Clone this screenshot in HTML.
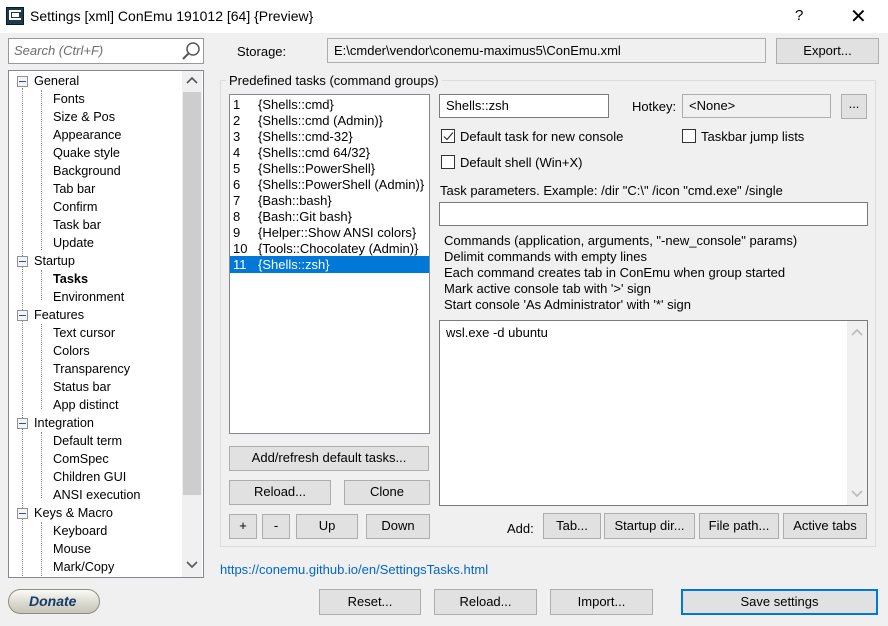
<!DOCTYPE html>
<html><head><style>
*{box-sizing:border-box}
body{margin:0;width:888px;height:626px;background:#f0f0f0;font-family:"Liberation Sans",sans-serif;font-size:13px;color:#000;position:relative;overflow:hidden}
div,span{position:absolute}
.b{background:#e1e1e1;border:1px solid #adadad;text-align:center;line-height:22px;white-space:nowrap}
.e{background:#fff;border:1px solid #7a7a7a;white-space:nowrap}
.t{white-space:nowrap}
.cb{width:14px;height:14px;border:1px solid #333;background:#fff}
.tr span{position:absolute;white-space:nowrap}
.tree span{font-size:12.7px}
</style></head><body>
<div style="left:0;top:0;width:888px;height:33px;background:#fff"></div>
<div style="left:6px;top:7px;width:18px;height:18px;background:#1d3b4a;border:1px solid #0b1a22"></div>
<div style="left:9px;top:10px;width:12px;height:10px;border:2px solid #fff;border-right:none"></div>
<div style="left:12px;top:13px;width:7px;height:4px;border-top:2px solid #fff;border-bottom:2px solid #fff"></div>
<div class="t" style="left:30px;top:8px;font-size:14px">Settings [xml] ConEmu 191012 [64] {Preview}</div>
<div class="t" style="left:795px;top:7px;font-size:15px">?</div>
<div class="t" style="left:850px;top:4px;font-size:20px;font-weight:300">✕</div>

<div class="e" style="left:8px;top:38px;width:196px;height:26px;border-color:#999"></div>
<div class="t" style="left:14px;top:43px;color:#6d6d6d;font-style:italic">Search (Ctrl+F)</div>
<svg style="position:absolute;left:180px;top:40px" width="22" height="22"><circle cx="13" cy="9" r="6" fill="none" stroke="#555" stroke-width="1.5"/><line x1="9" y1="13" x2="3" y2="19" stroke="#555" stroke-width="2"/></svg>

<div class="e" style="left:8px;top:70px;width:196px;height:508px;border-color:#828790"></div>
<div style="left:182px;top:71px;width:20px;height:506px;background:#f0f0f0"></div>
<div style="left:183px;top:92px;width:18px;height:403px;background:#cdcdcd"></div>
<svg style="position:absolute;left:186px;top:76px" width="12" height="8"><path d="M1 7 L6 2 L11 7" fill="none" stroke="#555" stroke-width="1.6"/></svg>
<svg style="position:absolute;left:186px;top:561px" width="12" height="8"><path d="M1 1 L6 6 L11 1" fill="none" stroke="#555" stroke-width="1.6"/></svg>
<div style="left:22px;top:88px;width:0;height:490px;border-left:1px dotted #888"></div>
<div style="left:41px;top:90px;width:0;height:160px;border-left:1px dotted #888"></div>
<div style="left:41px;top:270px;width:0;height:30px;border-left:1px dotted #888"></div>
<div style="left:41px;top:324px;width:0;height:85px;border-left:1px dotted #888"></div>
<div style="left:41px;top:432px;width:0;height:66px;border-left:1px dotted #888"></div>
<div style="left:41px;top:522px;width:0;height:56px;border-left:1px dotted #888"></div>
<div class="tr tree" style="left:0;top:0">
<span style="left:34px;top:74px">General</span>
<span style="left:53px;top:92px">Fonts</span>
<span style="left:53px;top:110px">Size &amp; Pos</span>
<span style="left:53px;top:128px">Appearance</span>
<span style="left:53px;top:146px">Quake style</span>
<span style="left:53px;top:164px">Background</span>
<span style="left:53px;top:182px">Tab bar</span>
<span style="left:53px;top:200px">Confirm</span>
<span style="left:53px;top:218px">Task bar</span>
<span style="left:53px;top:236px">Update</span>
<span style="left:34px;top:254px">Startup</span>
<span style="left:53px;top:272px;font-weight:bold">Tasks</span>
<span style="left:53px;top:290px">Environment</span>
<span style="left:34px;top:308px">Features</span>
<span style="left:53px;top:326px">Text cursor</span>
<span style="left:53px;top:344px">Colors</span>
<span style="left:53px;top:362px">Transparency</span>
<span style="left:53px;top:380px">Status bar</span>
<span style="left:53px;top:398px">App distinct</span>
<span style="left:34px;top:416px">Integration</span>
<span style="left:53px;top:434px">Default term</span>
<span style="left:53px;top:452px">ComSpec</span>
<span style="left:53px;top:470px">Children GUI</span>
<span style="left:53px;top:488px">ANSI execution</span>
<span style="left:34px;top:506px">Keys &amp; Macro</span>
<span style="left:53px;top:524px">Keyboard</span>
<span style="left:53px;top:542px">Mouse</span>
<span style="left:53px;top:560px">Mark/Copy</span>
</div>
<div style="left:17px;top:76px;width:11px;height:11px;border:1px solid #919191;background:#f4f4f4"></div><div style="left:19px;top:81px;width:7px;height:1px;background:#2b4fa0"></div>
<div style="left:17px;top:256px;width:11px;height:11px;border:1px solid #919191;background:#f4f4f4"></div><div style="left:19px;top:261px;width:7px;height:1px;background:#2b4fa0"></div>
<div style="left:17px;top:310px;width:11px;height:11px;border:1px solid #919191;background:#f4f4f4"></div><div style="left:19px;top:315px;width:7px;height:1px;background:#2b4fa0"></div>
<div style="left:17px;top:418px;width:11px;height:11px;border:1px solid #919191;background:#f4f4f4"></div><div style="left:19px;top:423px;width:7px;height:1px;background:#2b4fa0"></div>
<div style="left:17px;top:508px;width:11px;height:11px;border:1px solid #919191;background:#f4f4f4"></div><div style="left:19px;top:513px;width:7px;height:1px;background:#2b4fa0"></div>

<div style="left:8px;top:589px;width:92px;height:25px;border-radius:13px;border:1px solid #8d8d80;background:linear-gradient(#fbfbf6,#d7d7cc 60%,#c5c5b8)"></div>
<div class="t" style="left:29px;top:593px;font-size:14px;font-weight:bold;font-style:italic;color:#173a6d">Donate</div>

<div class="t" style="left:237px;top:44px">Storage:</div>
<div class="e" style="left:327px;top:38px;width:439px;height:25px;background:#f0f0f0;border-color:#adadad;padding:4px 6px">E:\cmder\vendor\conemu-maximus5\ConEmu.xml</div>
<div class="b" style="left:776px;top:38px;width:103px;height:26px;line-height:24px">Export...</div>

<div style="left:220px;top:80px;width:656px;height:467px;border:1px solid #dcdcdc"></div>
<div class="t" style="left:226px;top:73px;background:#f0f0f0;padding:0 3px">Predefined tasks (command groups)</div>

<div class="e" style="left:229px;top:94px;width:201px;height:340px;border-color:#828790"></div>
<div style="left:230px;top:256px;width:199px;height:17px;background:#0078d7"></div>
<div class="tr" style="left:0;top:0">
<span style="left:233px;top:97px">1</span><span style="left:258px;top:97px">{Shells::cmd}</span>
<span style="left:233px;top:113px">2</span><span style="left:258px;top:113px">{Shells::cmd (Admin)}</span>
<span style="left:233px;top:129px">3</span><span style="left:258px;top:129px">{Shells::cmd-32}</span>
<span style="left:233px;top:145px">4</span><span style="left:258px;top:145px">{Shells::cmd 64/32}</span>
<span style="left:233px;top:161px">5</span><span style="left:258px;top:161px">{Shells::PowerShell}</span>
<span style="left:233px;top:177px">6</span><span style="left:258px;top:177px">{Shells::PowerShell (Admin)}</span>
<span style="left:233px;top:193px">7</span><span style="left:258px;top:193px">{Bash::bash}</span>
<span style="left:233px;top:209px">8</span><span style="left:258px;top:209px">{Bash::Git bash}</span>
<span style="left:233px;top:225px">9</span><span style="left:258px;top:225px">{Helper::Show ANSI colors}</span>
<span style="left:233px;top:241px">10</span><span style="left:258px;top:241px">{Tools::Chocolatey (Admin)}</span>
<span style="left:233px;top:257px;color:#fff">11</span><span style="left:258px;top:257px;color:#fff">{Shells::zsh}</span>
</div>
<div class="b" style="left:229px;top:446px;width:200px;height:25px">Add/refresh default tasks...</div>
<div class="b" style="left:229px;top:480px;width:102px;height:25px">Reload...</div>
<div class="b" style="left:344px;top:480px;width:86px;height:25px">Clone</div>
<div class="b" style="left:229px;top:514px;width:28px;height:25px">+</div>
<div class="b" style="left:262px;top:514px;width:28px;height:25px">-</div>
<div class="b" style="left:296px;top:514px;width:62px;height:25px">Up</div>
<div class="b" style="left:366px;top:514px;width:64px;height:25px">Down</div>

<div class="e" style="left:439px;top:94px;width:170px;height:24px;padding:3px 6px">Shells::zsh</div>
<div class="t" style="left:632px;top:99px">Hotkey:</div>
<div class="e" style="left:682px;top:94px;width:149px;height:24px;background:#f0f0f0;border-color:#adadad;padding:3px 6px">&lt;None&gt;</div>
<div class="b" style="left:841px;top:94px;width:26px;height:25px;line-height:18px">...</div>
<div class="cb" style="left:441px;top:129px"></div>
<svg style="position:absolute;left:442px;top:130px" width="13" height="13"><path d="M2 6.5 L5 9.5 L11 2.5" fill="none" stroke="#333" stroke-width="1.2"/></svg>
<div class="t" style="left:460px;top:129px">Default task for new console</div>
<div class="cb" style="left:682px;top:129px"></div>
<div class="t" style="left:701px;top:129px">Taskbar jump lists</div>
<div class="cb" style="left:441px;top:155px"></div>
<div class="t" style="left:460px;top:155px">Default shell (Win+X)</div>
<div class="t" style="left:440px;top:183px">Task parameters. Example: /dir "C:\" /icon "cmd.exe" /single</div>
<div class="e" style="left:439px;top:202px;width:429px;height:24px"></div>
<div class="t" style="left:444px;top:233px;line-height:16px">Commands (application, arguments, "-new_console" params)<br>Delimit commands with empty lines<br>Each command creates tab in ConEmu when group started<br>Mark active console tab with '&gt;' sign<br>Start console 'As Administrator' with '*' sign</div>
<div class="e" style="left:439px;top:320px;width:429px;height:186px;padding:4px 6px">wsl.exe -d ubuntu</div>
<div style="left:847px;top:321px;width:20px;height:184px;background:#f0f0f0"></div>
<svg style="position:absolute;left:851px;top:328px" width="12" height="8"><path d="M1 7 L6 2 L11 7" fill="none" stroke="#bbb" stroke-width="1.6"/></svg>
<svg style="position:absolute;left:851px;top:490px" width="12" height="8"><path d="M1 1 L6 6 L11 1" fill="none" stroke="#bbb" stroke-width="1.6"/></svg>
<div class="t" style="left:507px;top:521px">Add:</div>
<div class="b" style="left:543px;top:513px;width:58px;height:26px;line-height:24px">Tab...</div>
<div class="b" style="left:604px;top:513px;width:91px;height:26px;line-height:24px">Startup dir...</div>
<div class="b" style="left:699px;top:513px;width:80px;height:26px;line-height:24px">File path...</div>
<div class="b" style="left:783px;top:513px;width:84px;height:26px;line-height:24px">Active tabs</div>

<div class="t" style="left:220px;top:562px;color:#0066cc">https://conemu.github.io/en/SettingsTasks.html</div>
<div class="b" style="left:319px;top:589px;width:102px;height:26px;line-height:24px">Reset...</div>
<div class="b" style="left:434px;top:589px;width:103px;height:26px;line-height:24px">Reload...</div>
<div class="b" style="left:550px;top:589px;width:103px;height:26px;line-height:24px">Import...</div>
<div class="b" style="left:681px;top:589px;width:197px;height:26px;line-height:22px;border:2px solid #0078d7">Save settings</div>
</body></html>
